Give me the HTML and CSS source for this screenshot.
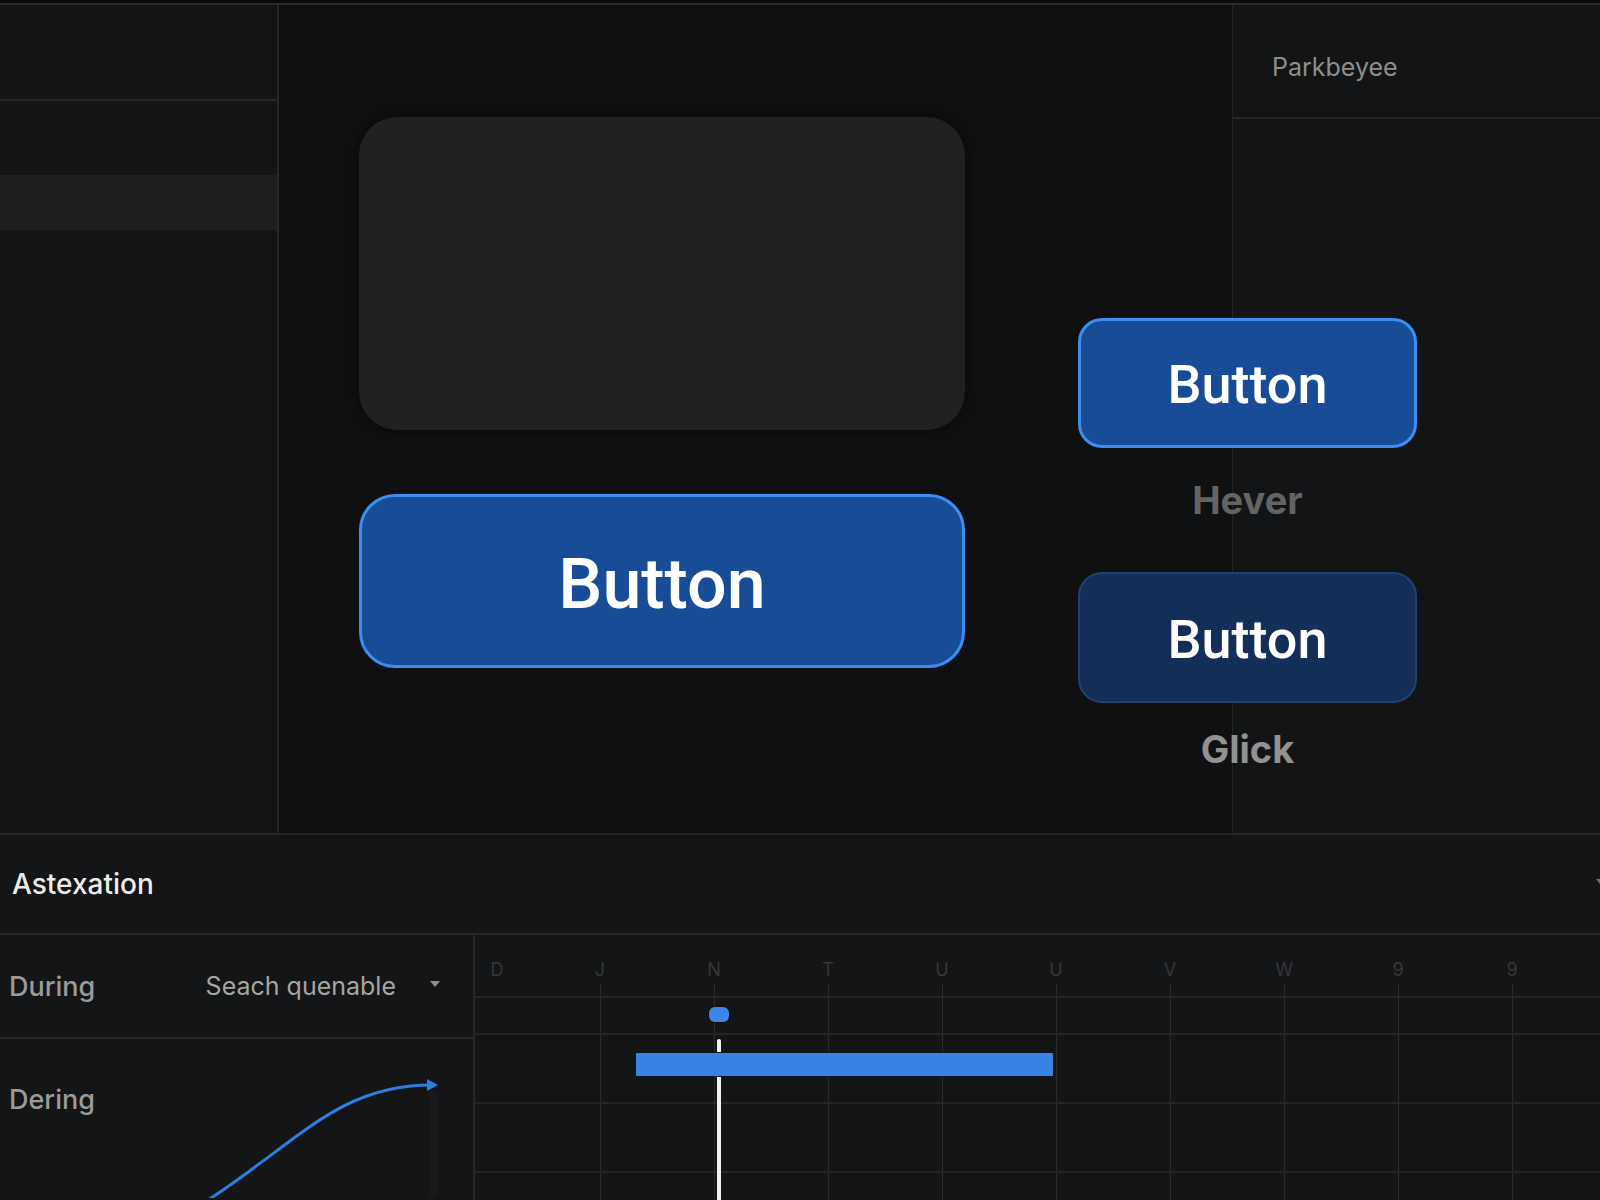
FILE: index.html
```html
<!DOCTYPE html>
<html lang="en">
<head>
    <meta charset="UTF-8">
    <meta name="viewport" content="width=device-width, initial-scale=1.0">
    <title>Button states</title>
    <link rel="stylesheet" href="styles.css">
</head>
<body>

<div class="topline"></div>

<div class="upper">
    <aside class="sidebar">
        <div class="side-head"></div>
        <div class="side-gap"></div>
        <div class="side-band"></div>
    </aside>

    <section class="inspector">
        <div class="inspector-head">Parkbeyee</div>
    </section>

    <main class="preview">
        <div class="preview-main">
            <div class="card"></div>
            <button class="btn btn-large">Button</button>
        </div>
        <div class="preview-states">
            <button class="btn btn-small">Button</button>
            <div class="state-label state-hover">Hever</div>
            <button class="btn btn-small btn-pressed">Button</button>
            <div class="state-label state-click">Glick</div>
        </div>
    </main>
</div>

<div class="bottom">
    <div class="bottom-head">
        <span>Astexation</span>
        <svg class="head-caret" width="8" height="8" viewBox="0 0 8 8"><path d="M0 2 L8 2 L4 7 Z" fill="#6f6f6f"/></svg>
    </div>

    <div class="bottom-body">
        <div class="props">
            <div class="prop-row">
                <span class="prop-name">During</span>
                <span class="prop-select">
                    Seach quenable
                    <svg width="10" height="6" viewBox="0 0 10 6"><path d="M0 0 L10 0 L5 6 Z" fill="#8d8d8d"/></svg>
                </span>
            </div>
            <div class="prop-row prop-curve">
                <span class="prop-name">Dering</span>
                <svg class="curve" width="473" height="159" viewBox="0 0 473 159">
                    <rect x="429" y="52" width="8" height="107" fill="#18191a"/>
                    <path d="M208 161 C 300 101, 340 46, 431 46" fill="none" stroke="#2f7fe2" stroke-width="3"/>
                    <path d="M427 40 L438 46 L427 52 Z" fill="#2f7fe2"/>
                </svg>
            </div>
        </div>

        <div class="timeline">
            <div class="gridlines">
                <span></span><span></span><span></span><span></span><span></span>
                <span></span><span></span><span></span><span></span>
            </div>
            <div class="playhead"></div>

            <div class="ruler">
                <span class="tick">D</span>
                <span class="tick">J</span>
                <span class="tick">N</span>
                <span class="tick">T</span>
                <span class="tick">U</span>
                <span class="tick">U</span>
                <span class="tick">V</span>
                <span class="tick">W</span>
                <span class="tick">9</span>
                <span class="tick">9</span>
            </div>
            <div class="track track-keys"><span class="key"></span></div>
            <div class="track track-clip"><span class="clip"></span></div>
            <div class="track track-empty"></div>
            <div class="track track-last"></div>
        </div>
    </div>
</div>

</body>
</html>
```

FILE: styles.css
```css
body {
    margin: 0;
    padding: 0;
    width: 1600px;
    height: 1200px;
    overflow: hidden;
    background-color: #111213;
    font-family: Inter, "Noto Sans", sans-serif;
    color: #e6e6e6;
}
.topline {
    height: 3px;
    background-color: #0b0b0c;
    border-bottom: 2px solid #2a2b2c;
}

/* upper area: sidebar | canvas | inspector, preview laid over canvas + inspector */
.upper {
    display: grid;
    grid-template-columns: 279px 953px 368px;
    height: 828px;
    background-color: #0f1011;
}
.sidebar {
    grid-column: 1;
    grid-row: 1;
    background-color: #141516;
    border-right: 2px solid #262728;
}
.side-head {
    height: 94px;
    border-bottom: 2px solid #262728;
}
.side-gap {
    height: 74px;
}
.side-band {
    height: 55px;
    background-color: #1d1e1f;
}
.inspector {
    grid-column: 3;
    grid-row: 1;
    background-color: #131415;
    border-left: 1px solid #232425;
}
.inspector-head {
    height: 100px;
    padding: 12px 0 0 39px;
    display: flex;
    align-items: center;
    border-bottom: 2px solid #262728;
    font-size: 25px;
    color: #8e8e8e;
}
.preview {
    grid-column: 2 / 4;
    grid-row: 1;
    z-index: 1;
    display: flex;
    gap: 113px;
    padding: 112px 0 0 80px;
}
.preview-main {
    display: flex;
    flex-direction: column;
    gap: 64px;
    width: 606px;
}
.card {
    height: 313px;
    border-radius: 38px;
    background-color: #202122;
    box-shadow: 0 0 14px rgba(0, 0, 0, 0.55);
}
.btn {
    display: flex;
    align-items: center;
    justify-content: center;
    padding: 0;
    font-family: Roboto, Inter, sans-serif;
    font-weight: 500;
    color: #ffffff;
    background-color: #194c97;
    border: 3px solid #3d8ef0;
    cursor: pointer;
}
.btn-large {
    height: 174px;
    padding-top: 6px;
    border-radius: 36px;
    font-size: 70px;
}
.preview-states {
    display: flex;
    flex-direction: column;
    align-items: center;
    width: 339px;
    margin-top: 201px;
}
.btn-small {
    width: 339px;
    height: 130px;
    padding-top: 3px;
    border-radius: 24px;
    font-size: 54px;
}
.btn-pressed {
    height: 131px;
    background-color: #132f57;
    border: 2px solid #1f426f;
}
.state-label {
    height: 52px;
    line-height: 52px;
    font-size: 38px;
    font-weight: 700;
}
.state-hover {
    margin: 26px 0 46px;
    color: #646464;
}
.state-click {
    margin-top: 20px;
    color: #929292;
}

/* bottom: animation panel */
.bottom {
    border-top: 2px solid #262728;
    background-color: #141516;
    height: 365px;
}
.bottom-head {
    height: 98px;
    display: flex;
    align-items: center;
    justify-content: space-between;
    padding-left: 12px;
    border-bottom: 2px solid #262728;
    font-size: 28px;
    font-weight: 500;
    color: #ececec;
}
.head-caret {
    margin-right: -4px;
    margin-top: -6px;
}
.bottom-body {
    display: flex;
    height: 265px;
}
.props {
    width: 473px;
    border-right: 2px solid #262728;
}
.prop-row {
    height: 102px;
    display: flex;
    align-items: center;
    justify-content: space-between;
    padding: 0 33px 0 9px;
    border-bottom: 2px solid #262728;
    font-size: 27px;
    font-weight: 500;
}
.prop-name {
    color: #9b9b9b;
}
.prop-select {
    display: flex;
    align-items: center;
    gap: 34px;
    font-size: 25px;
    color: #a6a6a6;
    font-weight: 400;
}
.prop-select svg {
    margin-top: -4px;
}
.prop-curve {
    position: relative;
    height: 161px;
    align-items: flex-start;
    padding-top: 46px;
    box-sizing: border-box;
    border-bottom: none;
}
.prop-curve .prop-name {
    line-height: 30px;
}
.curve {
    position: absolute;
    left: 0;
    top: 0;
}

.timeline {
    position: relative;
    flex: 1;
    overflow: hidden;
}
.gridlines {
    position: absolute;
    top: 48px;
    bottom: 0;
    left: 0;
    display: flex;
    padding-left: 125px;
}
.gridlines span {
    width: 113px;
    border-left: 1px solid #2a2b2c;
}
.playhead {
    position: absolute;
    z-index: 1;
    left: 242px;
    top: 104px;
    bottom: 0;
    width: 4px;
    border-radius: 2px 2px 0 0;
    background-color: #f2f2f2;
}
.ruler {
    position: relative;
    height: 63px;
    display: flex;
    padding-top: 24px;
    box-sizing: border-box;
    border-bottom: 2px solid #242526;
    font-size: 18px;
    line-height: 22px;
    color: #363738;
}
.tick {
    width: 114px;
    text-align: center;
}
.tick:first-child {
    width: 44px;
    margin-right: 24px;
}
.track {
    position: relative;
    border-bottom: 2px solid #242526;
}
.track-keys {
    height: 35px;
}
.track-clip {
    height: 67px;
}
.track-empty {
    height: 67px;
}
.track-last {
    border-bottom: none;
}
.key {
    position: absolute;
    z-index: 2;
    left: 233px;
    top: 8px;
    width: 20px;
    height: 15px;
    border-radius: 7px;
    background-color: #3b86e8;
    border: 1px solid #0a0b0c;
}
.clip {
    position: absolute;
    z-index: 2;
    left: 160px;
    top: 17px;
    width: 417px;
    height: 23px;
    border-radius: 2px;
    background-color: #3a82e4;
    border: 1px solid #0c1625;
}
```
